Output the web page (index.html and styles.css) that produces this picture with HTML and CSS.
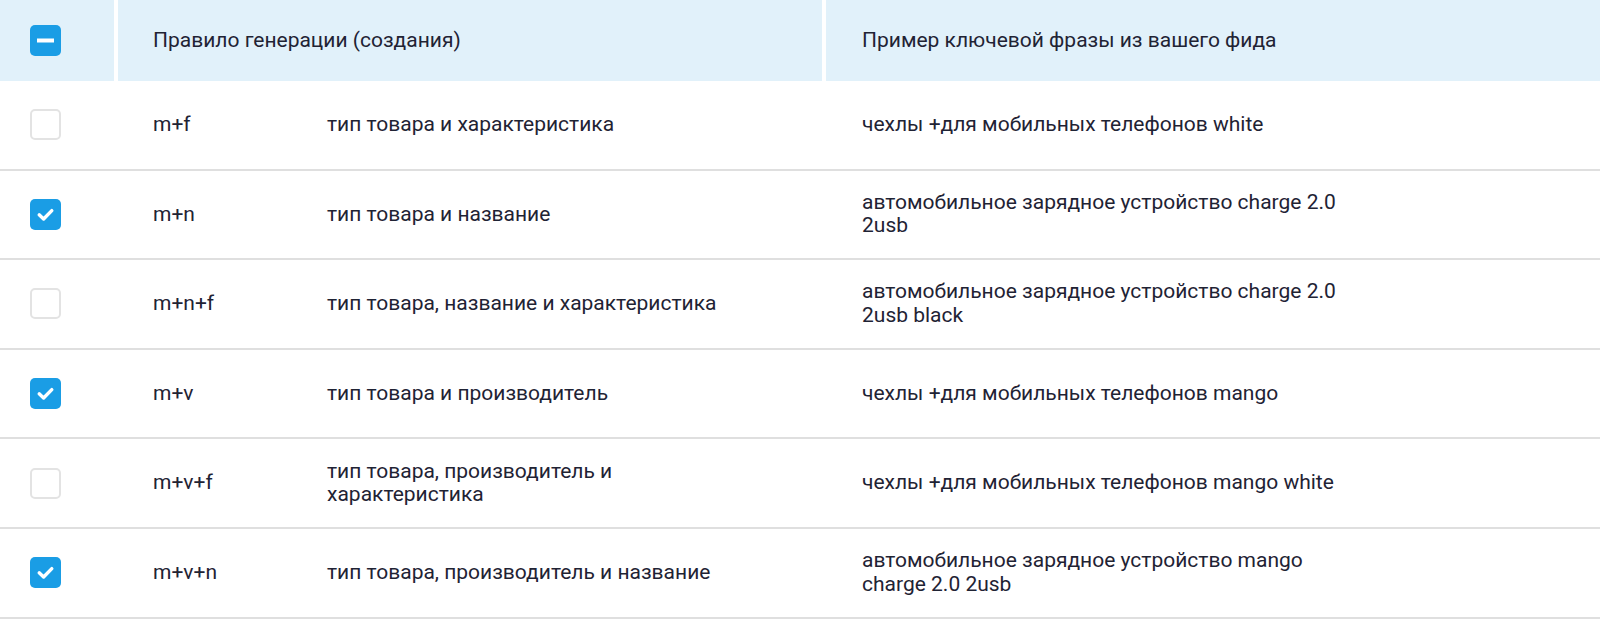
FILE: index.html
```html
<!DOCTYPE html>
<html lang="ru">
<head>
<meta charset="utf-8">
<link rel="stylesheet" href="styles.css">
</head>
<body>
<div class="table">
  <div class="head">
    <div class="hcell hcheck">
      <span class="cb cb-on"><svg viewBox="0 0 31 31" width="31" height="31"><rect x="7" y="13.5" width="17" height="4" fill="#fff"/></svg></span>
    </div>
    <div class="hcell hrule">Правило генерации (создания)</div>
    <div class="hcell hex">Пример ключевой фразы из вашего фида</div>
  </div>

  <div class="row">
    <div class="c-check"><span class="cb"></span></div>
    <div class="c-code">m+f</div>
    <div class="c-desc"><span class="txt">тип товара и характеристика</span></div>
    <div class="c-ex"><span class="ex">чехлы +для мобильных телефонов white</span></div>
  </div>

  <div class="row">
    <div class="c-check"><span class="cb cb-on"><svg viewBox="0 0 31 31" width="31" height="31"><path d="M9.2 15.8 L13.6 20 L21.8 11.6" fill="none" stroke="#fff" stroke-width="3.4" stroke-linecap="round" stroke-linejoin="round"/></svg></span></div>
    <div class="c-code">m+n</div>
    <div class="c-desc"><span class="txt">тип товара и название</span></div>
    <div class="c-ex"><span class="ex">автомобильное зарядное устройство charge 2.0 2usb</span></div>
  </div>

  <div class="row">
    <div class="c-check"><span class="cb"></span></div>
    <div class="c-code">m+n+f</div>
    <div class="c-desc"><span class="txt">тип товара, название и характеристика</span></div>
    <div class="c-ex"><span class="ex">автомобильное зарядное устройство charge 2.0 2usb black</span></div>
  </div>

  <div class="row">
    <div class="c-check"><span class="cb cb-on"><svg viewBox="0 0 31 31" width="31" height="31"><path d="M9.2 15.8 L13.6 20 L21.8 11.6" fill="none" stroke="#fff" stroke-width="3.4" stroke-linecap="round" stroke-linejoin="round"/></svg></span></div>
    <div class="c-code">m+v</div>
    <div class="c-desc"><span class="txt">тип товара и производитель</span></div>
    <div class="c-ex"><span class="ex">чехлы +для мобильных телефонов mango</span></div>
  </div>

  <div class="row">
    <div class="c-check"><span class="cb"></span></div>
    <div class="c-code">m+v+f</div>
    <div class="c-desc"><span class="txt">тип товара, производитель и характеристика</span></div>
    <div class="c-ex"><span class="ex">чехлы +для мобильных телефонов mango white</span></div>
  </div>

  <div class="row">
    <div class="c-check"><span class="cb cb-on"><svg viewBox="0 0 31 31" width="31" height="31"><path d="M9.2 15.8 L13.6 20 L21.8 11.6" fill="none" stroke="#fff" stroke-width="3.4" stroke-linecap="round" stroke-linejoin="round"/></svg></span></div>
    <div class="c-code">m+v+n</div>
    <div class="c-desc"><span class="txt">тип товара, производитель и название</span></div>
    <div class="c-ex"><span class="ex">автомобильное зарядное устройство mango charge 2.0 2usb</span></div>
  </div>
</div>
</body>
</html>
```

FILE: styles.css
```css
* { box-sizing: border-box; }

html, body {
  margin: 0;
  padding: 0;
  background: #ffffff;
}

body {
  font-family: Roboto, "Noto Sans", "Liberation Sans", sans-serif;
  font-size: 21px;
  line-height: 23.5px;
  color: #1f2334;
}

.table {
  width: 1600px;
}

.head {
  display: flex;
  gap: 4px;
  height: 81px;
  background: #ffffff;
}

.hcell {
  background: #e1f1fa;
  display: flex;
  align-items: center;
}

.hcheck {
  width: 114px;
  flex: none;
  padding-left: 30px;
}

.hrule {
  width: 704px;
  flex: none;
  padding-left: 35px;
}

.hex {
  flex: 1;
  padding-left: 36px;
}

.row {
  display: grid;
  grid-template-columns: 118px 209px 499px 1fr;
  height: 89.6px;
  border-bottom: 2px solid #dfdfdf;
  align-items: center;
}

.c-check {
  padding-left: 30px;
  display: flex;
  align-items: center;
}

.c-code {
  padding-left: 35px;
}

.c-desc .txt {
  display: block;
  max-width: 400px;
}

.c-ex {
  padding-left: 36px;
}

.c-ex .ex {
  display: block;
  max-width: 485px;
}

.cb {
  display: block;
  width: 31px;
  height: 31px;
  border-radius: 5px;
  border: 2px solid #e3e3e3;
  background: #ffffff;
}

.cb-on {
  border: none;
  background: #1a9de5;
}

.cb svg {
  display: block;
}
```
